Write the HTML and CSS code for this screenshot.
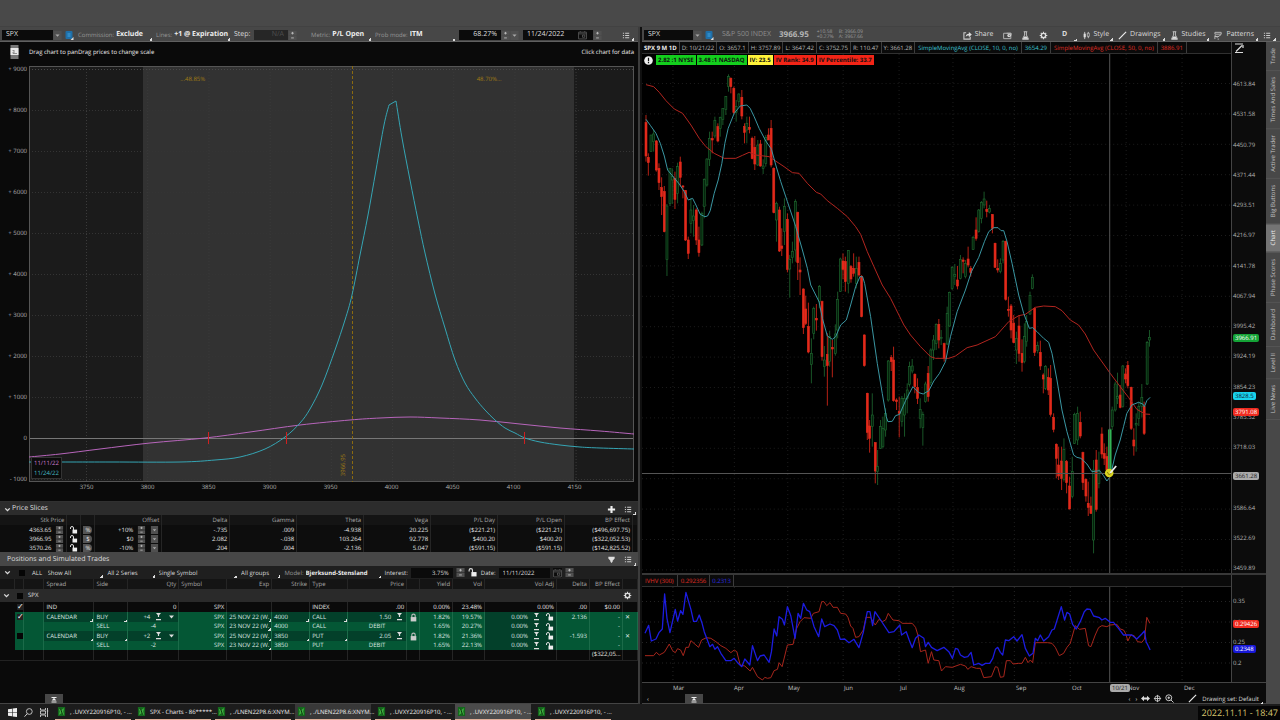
FILE: index.html
```html
<!DOCTYPE html>
<html lang="en">
<head>
<meta charset="utf-8">
<title>SPX - Charts</title>
<link rel="stylesheet" href="styles.css">
</head>
<body>
<svg class="defs" aria-hidden="true">
  <symbol id="i-link" viewBox="0 0 8 9"><rect width="7" height="8" rx="1" fill="#1f6fa8"/><path d="M2 2h3v4H2z" fill="#2f8ac6"/><path d="M8 9H5l3-3z" fill="#ddd"/></symbol>
  <symbol id="i-menu" viewBox="0 0 10 10"><path d="M1 2.500h1.300M3.500 2.500H8M1 5h1.300M3.500 5H8M1 7.500h1.300M3.500 7.500H8" stroke="#ccc" stroke-width="1.100"/></symbol>
  <symbol id="i-spin" viewBox="0 0 9 10"><path d="M0 0h9v4.600H0zM0 5.400h9V10H0z" fill="#505050"/><path d="M3 2.400h3M4.500 1v2.800M3 7.700h3" stroke="#bbb"/></symbol>
  <symbol id="i-step" viewBox="0 0 8 8"><path d="M1.500 0h5L4 3zM3.400 2h1.200v2H3.400zM1.500 6h5v1.300h-5z" fill="#ddd"/></symbol>
  <symbol id="i-down" viewBox="0 0 9 10"><path d="M0 0h9v10H0z" fill="#505050"/><path d="M2.200 4h4.600L4.500 6.500z" fill="#aaa"/></symbol>
  <symbol id="i-caret" viewBox="0 0 8 8"><path d="M1.500 2.500h5L4 5.500z" fill="#ddd"/></symbol>
  <symbol id="i-cal" viewBox="0 0 8 8"><path d="M.5 1.500h7v6h-7zM.5 3h7M2 .5v1M6 .5v1M4 4h2v2H4z" fill="none" stroke="#555" stroke-width=".8"/></symbol>
  <symbol id="i-chev" viewBox="0 0 8 8"><path d="M2 3l2 2 2-2" fill="none" stroke="#ddd" stroke-width="1.200"/></symbol>
  <symbol id="i-open" viewBox="0 0 8 8"><path d="M1 3V2a1.500 1.500 0 0 1 3 0v2" fill="none" stroke="#ddd"/><path d="M3 3.600h4.600V7.500H3z" fill="#eee"/></symbol>
  <symbol id="i-lock" viewBox="0 0 8 8"><path d="M2.500 4V2.500a1.500 1.500 0 0 1 3 0V4" fill="none" stroke="#bbb"/><path d="M1.500 3.600h5V7.500h-5z" fill="#ccc"/></symbol>
  <symbol id="i-gear" viewBox="0 0 10 10"><circle cx="5" cy="5" r="2.400" fill="none" stroke="#ddd" stroke-width="1.500"/><path d="M5 .8v1.500M5 7.700v1.500M.8 5h1.500M7.700 5h1.500M2 2l1.100 1.100M6.900 6.900L8 8M2 8l1.100-1.100M6.900 3.100L8 2" stroke="#ddd" stroke-width="1.300"/></symbol>
  <symbol id="i-flask" viewBox="0 0 10 10"><path d="M3 .8h4M4 1v3.500L1.800 8.500h6.400L6 4.500V1M1.500 9.300h7" fill="none" stroke="#ccc"/><path d="M3.500 6h3l1.200 2.500H2.300z" fill="#ddd"/></symbol>
  <symbol id="i-share" viewBox="0 0 10 10"><path d="M3.500 2H1v7h7V6.500" fill="none" stroke="#ccc" stroke-width="1.200"/><path d="M3 6.500C3.200 4 4.500 3 6.500 3V1L9.800 4 6.500 7V5C5 5 4 5.300 3 6.500z" fill="#ddd"/></symbol>
  <symbol id="i-folder" viewBox="0 0 10 10"><path d="M.7 2.500h8v6h-8zM4 2.500h5v2.500" fill="none" stroke="#bbb"/><circle cx="6.800" cy="5" r="2" fill="#ddd"/><path d="M6.800 4v1.200h1" stroke="#444" stroke-width=".7" fill="none"/></symbol>
  <symbol id="i-style" viewBox="0 0 10 10"><path d="M3 1v8M7 1v7" stroke="#ccc"/><path d="M1.800 3h2.400v4H1.800z" fill="#ddd"/><path d="M5.900 2.500h2.200v3.500H5.900z" fill="#4a4a4a" stroke="#ccc" stroke-width=".8"/></symbol>
  <symbol id="i-line" viewBox="0 0 10 10"><path d="M1 9l8-8" stroke="#eee" stroke-width="1.300"/></symbol>
  <symbol id="i-pattern" viewBox="0 0 10 10"><path d="M1 1.500h7v2H1zM1 9V5l2.500 2L8 4M4 9h1.500M1 6h4" fill="none" stroke="#ccc" stroke-width=".9"/></symbol>
  <symbol id="i-plus" viewBox="0 0 8 8"><path d="M4 .8v6.400M.8 4h6.400" stroke="#eee" stroke-width="1.900"/></symbol>
  <symbol id="i-filter" viewBox="0 0 8 8"><path d="M1.200 1.500h5.600v1.500L5 5v1L4 7 3 6V5L1.200 3z" fill="#ddd"/></symbol>
  <symbol id="i-doc" viewBox="0 0 9 14"><path d="M.5 0h8v14h-8z" fill="#777"/><path d="M.5 3h8v7h-8z" fill="#e8e8e8"/><path d="M2.500 5.500h2M5 7H3v1.500h4" stroke="#777" stroke-width=".8" fill="none"/></symbol>
  <symbol id="i-warn" viewBox="0 0 9 9"><circle cx="4.500" cy="4.500" r="4.300" fill="#eee"/><path d="M4.500 1.700v3.600M4.500 6v1.300" stroke="#111" stroke-width="1.200"/></symbol>
  <symbol id="i-up" viewBox="0 0 18 10"><path d="M0 0h18v10H0z" fill="#474747"/><path d="M6.500 3.500h5M6.500 8h5" stroke="#eee"/><path d="M9 3.700l2.300 2.800H6.700z" fill="#eee"/></symbol>
  <symbol id="i-axis" viewBox="0 0 10 12"><path d="M1 2h8M1 10.500h8M2 9.500l6-6M9 3v3" stroke="#ddd" stroke-width="1.200" fill="none"/></symbol>
  <symbol id="i-width" viewBox="0 0 10 10"><path d="M0 5l3.300-3v2h3.400V2L10 5 6.700 8V6H3.300v2z" fill="#ddd"/></symbol>
  <symbol id="i-cross" viewBox="0 0 10 10"><circle cx="5" cy="5" r="3" fill="none" stroke="#ccc"/><path d="M5 1v8M1 5h8" stroke="#ccc"/></symbol>
  <symbol id="i-zoom" viewBox="0 0 10 10"><circle cx="4.200" cy="4.200" r="3.300" fill="none" stroke="#ddd"/><path d="M6.700 6.700L9.500 9.500M2.700 4.200h3M4.200 2.700v3" stroke="#ddd"/></symbol>
  <symbol id="i-win" viewBox="0 0 9 9"><path d="M0 1.300L4 .7v3.600H0zM4.600.6L9 0v4.300H4.600zM0 4.800h4v3.500L0 7.800zM4.600 4.800H9V9l-4.400-.6z" fill="#eee"/></symbol>
  <symbol id="i-find" viewBox="0 0 9 9"><circle cx="5.300" cy="3.500" r="2.900" fill="none" stroke="#ccc" stroke-width=".9"/><path d="M3.200 5.700L.5 8.700" stroke="#ccc"/></symbol>
  <symbol id="i-task" viewBox="0 0 9 9"><path d="M.5 0v2h5V0M.5 9V7h5v2M.5 3h5v3h-5zM7.500 0v9M6.800 3h1.500" fill="none" stroke="#ccc" stroke-width=".9"/></symbol>
  <symbol id="i-app" viewBox="0 0 8 10"><path d="M0 0h8v10H0z" fill="#14671c"/><path d="M1 2l3 1 3-2-1 4 1 4-3-2-3 2 1-4z" fill="#3fae3f"/><path d="M3 2l2 6" stroke="#0a2b0c"/></symbol>
</svg>

<header class="titlebar"></header>
<main class="workspace">
  <section class="risk">
    <form class="toolbar risk-bar">
      <div class="sym"><input class="box" aria-label="Symbol" value="SPX"><button type="button" aria-label="Symbols"><svg class="ic"><use href="#i-down"/></svg></button><svg class="ic link"><use href="#i-link"/></svg></div>
      <label class="tri"><span>Commission:</span><select><option>Exclude</option></select></label>
      <label class="tri"><span>Lines:</span><select><option>+1 @ Expiration</option></select></label>
      <label class="step">Step:<input class="box dim" value="N/A" disabled><svg class="ic"><use href="#i-spin"/></svg></label>
      <label class="tri"><span>Metric:</span><select><option>P/L Open</option></select></label>
      <label class="tri"><span>Prob mode:</span><select><option>ITM</option></select></label>
      <div class="group"><input class="box right" aria-label="Probability" value="68.27%"><svg class="ic"><use href="#i-spin"/></svg><svg class="ic"><use href="#i-down"/></svg></div>
      <div class="group"><input class="box" aria-label="Expiration date" value="11/24/2022"><svg class="ic cal"><use href="#i-cal"/></svg><span class="gapbox"></span><svg class="ic"><use href="#i-spin"/></svg></div>
      <button type="button" class="tri end" aria-label="Menu"><svg class="ic"><use href="#i-menu"/></svg></button>
    </form>
    <div class="hint"><svg class="doc"><use href="#i-doc"/></svg><span>Drag chart to panDrag prices to change scale</span><span class="push">Click chart for data</span></div>
    <div class="risk-chart">
      <div class="risk-y"><span>+ 9000</span><span>+ 8000</span><span>+ 7000</span><span>+ 6000</span><span>+ 5000</span><span>+ 4000</span><span>+ 3000</span><span>+ 2000</span><span>+ 1000</span><span>0</span><span>- 1000</span></div>
      <div class="plot"><svg id="risk" viewBox="0 0 605 416" preserveAspectRatio="none"></svg>
        <span class="prob p1">...48.85%</span><span class="prob p2">48.70%...</span><span class="strike">3966.95</span>
        <div class="dates"><span>11/11/22</span><span>11/24/22</span></div>
      </div>
      <div class="risk-x"><span>3750</span><span>3800</span><span>3850</span><span>3900</span><span>3950</span><span>4000</span><span>4050</span><span>4100</span><span>4150</span></div>
    </div>
    <div class="bar dark"><svg class="ic"><use href="#i-chev"/></svg><h2>Price Slices</h2><button class="push" aria-label="Add slice"><svg class="ic"><use href="#i-plus"/></svg></button><button class="tri end" aria-label="Menu"><svg class="ic"><use href="#i-menu"/></svg></button></div>
    <table class="slices" id="slices"></table>
    <div class="bar"><h2>Positions and Simulated Trades</h2><button class="push" aria-label="Filter"><svg class="ic"><use href="#i-filter"/></svg></button><button class="tri end" aria-label="Menu"><svg class="ic"><use href="#i-menu"/></svg></button></div>
    <form class="filters">
      <svg class="ic"><use href="#i-chev"/></svg>
      <label class="all"><input type="checkbox">ALL</label>
      <select class="tri" aria-label="Show"><option>Show All</option></select>
      <select class="tri" aria-label="Series"><option>All 2 Series</option></select>
      <select class="tri" aria-label="Symbol filter"><option>Single Symbol</option></select>
      <select class="tri" aria-label="Groups"><option>All groups</option></select>
      <label class="tri"><span>Model:</span><select class="strong"><option>Bjerksund-Stensland</option></select></label>
      <label class="rate">Interest:<input class="box right" value="3.75%"><svg class="ic"><use href="#i-spin"/></svg><svg class="ic"><use href="#i-open"/></svg></label>
      <label class="rate">Date:<input class="box" value="11/11/2022"><svg class="ic cal"><use href="#i-cal"/></svg><svg class="ic"><use href="#i-spin"/></svg></label>
    </form>
    <table class="positions" id="positions"></table>
    <footer class="pane-foot"><button aria-label="Expand"><svg class="up"><use href="#i-up"/></svg></button></footer>
  </section>

  <section class="charts">
    <form class="toolbar chart-bar">
      <div class="sym"><input class="box" aria-label="Chart symbol" value="SPX"><button type="button" aria-label="Symbols"><svg class="ic"><use href="#i-down"/></svg></button><svg class="ic link"><use href="#i-link"/></svg></div>
      <span class="name">S&amp;P 500 INDEX</span><strong class="last">3966.95</strong>
      <div class="two"><span>+10.58</span><span>+0.27%</span></div><div class="two"><span>B: 3966.09</span><span>A: 3967.66</span></div>
      <button type="button" class="push"><svg class="ic"><use href="#i-share"/></svg>Share</button>
      <button type="button" aria-label="Workspaces"><svg class="ic"><use href="#i-folder"/></svg></button>
      <button type="button" aria-label="Studies"><svg class="ic"><use href="#i-flask"/></svg></button>
      <button type="button" aria-label="Settings"><svg class="ic"><use href="#i-gear"/></svg></button>
      <button type="button" class="tri day">D</button>
      <button type="button" class="tri"><svg class="ic"><use href="#i-style"/></svg>Style</button>
      <button type="button" class="tri"><svg class="ic"><use href="#i-line"/></svg>Drawings</button>
      <button type="button" class="tri"><svg class="ic"><use href="#i-flask"/></svg>Studies</button>
      <button type="button" class="tri"><svg class="ic"><use href="#i-pattern"/></svg>Patterns</button>
      <button type="button" class="tri" aria-label="Menu"><svg class="ic"><use href="#i-menu"/></svg></button>
    </form>
    <div class="body">
      <div class="stack">
        <div class="pair price">
          <div class="pane">
            <svg id="price" viewBox="0 0 590 531" preserveAspectRatio="none"></svg>
            <div class="ohlc"><b>SPX 9 M 1D</b><span>D: 10/21/22</span><span>O: 3657.1</span><span>H: 3757.89</span><span>L: 3647.42</span><span>C: 3752.75</span><span>R: 110.47</span><span>Y: 3661.28</span><span class="cy">SimpleMovingAvg (CLOSE, 10, 0, no)</span><span class="cy">3654.29</span><span class="rd">SimpleMovingAvg (CLOSE, 50, 0, no)</span><span class="rd">3886.91</span></div>
            <div class="badges"><svg class="ic"><use href="#i-warn"/></svg><span class="g">2.82 :1 NYSE</span><span class="g">3.48 :1 NASDAQ</span><span class="y">IV: 23.5</span><span class="r">IV Rank: 34.9</span><span class="r">IV Percentile: 33.7</span></div>
          </div>
          <div class="axis">
            <svg class="axis-ic"><use href="#i-axis"/></svg>
            <span>4613.84</span><span>4531.58</span><span>4450.79</span><span>4371.44</span><span>4293.51</span><span>4216.97</span><span>4141.78</span><span>4067.94</span><span>3995.42</span><span>3924.19</span><span>3854.23</span><span>3785.52</span><span>3718.03</span><span>3651.74</span><span>3586.64</span><span>3522.69</span><span>3459.89</span>
            <mark class="t-green">3966.91</mark><mark class="t-cyan">3828.5</mark><mark class="t-red">3791.08</mark><mark class="t-grey">3661.28</mark>
          </div>
        </div>
        <div class="pair vol">
          <div class="pane">
            <svg id="vol" viewBox="0 0 590 107" preserveAspectRatio="none"></svg>
            <div class="ohlc"><span class="rd">IVHV (300)</span><span class="rd">0.292356</span><span class="bl">0.2313</span></div>
          </div>
          <div class="axis"><span>0.35</span><span>0.3</span><span>0.25</span><span>0.2</span><mark class="v-red">0.29426</mark><mark class="v-blue">0.2348</mark></div>
        </div>
        <div class="months"><span></span><span>Mar</span><span>Apr</span><span>May</span><span>Jun</span><span>Jul</span><span>Aug</span><span>Sep</span><span>Oct</span><span>Nov</span><span>Dec</span><mark>10/21</mark></div>
        <footer class="pane-foot chart-foot"><button aria-label="Scroll left" class="small">‹</button><button aria-label="Expand"><svg class="up"><use href="#i-up"/></svg></button>
          <button class="push small" aria-label="Back">‹</button><button class="small" aria-label="Forward">›</button><button aria-label="Fit width"><svg class="ic"><use href="#i-width"/></svg></button><button aria-label="Crosshair"><svg class="ic"><use href="#i-cross"/></svg></button><button aria-label="Zoom"><svg class="ic"><use href="#i-zoom"/></svg></button><button class="draw" aria-label="Line"><svg class="ic"><use href="#i-line"/></svg></button><button class="tri set">Drawing set: Default</button></footer>
      </div>
      <nav class="tabs"><button>Trade</button><button>Times And Sales</button><button>Active Trader</button><button>Big Buttons</button><button class="on">Chart</button><button>Phase Scores</button><button>Dashboard</button><button>Level II</button><button>Live News</button></nav>
    </div>
  </section>
</main>
<footer class="taskbar">
  <button class="sys" aria-label="Start"><svg class="ic"><use href="#i-win"/></svg></button><button class="sys" aria-label="Search"><svg class="ic"><use href="#i-find"/></svg></button><button class="sys" aria-label="Task view"><svg class="ic"><use href="#i-task"/></svg></button>
  <button class="app"><svg class="ic"><use href="#i-app"/></svg>, .UVXY220916P10, - ...</button>
  <button class="app"><svg class="ic"><use href="#i-app"/></svg>SPX - Charts - 86*****...</button>
  <button class="app"><svg class="ic"><use href="#i-app"/></svg>, ./LNEN22P8.6:XNYM...</button>
  <button class="app lit"><svg class="ic"><use href="#i-app"/></svg>, ./LNEN22P8.6:XNYM...</button>
  <button class="app"><svg class="ic"><use href="#i-app"/></svg>, .UVXY220916P10, - ...</button>
  <button class="app active"><svg class="ic"><use href="#i-app"/></svg>, .UVXY220916P10, - ...</button>
  <button class="app"><svg class="ic"><use href="#i-app"/></svg>, .UVXY220916P10, - ...</button>
  <time>2022.11.11 - 18:47</time>
</footer>
<script src="app.js"></script>
</body>
</html>
```

FILE: styles.css
```css
* { box-sizing: border-box; }
body { margin: 0; min-height: 100vh; display: flex; flex-direction: column; background: #0a0a0a; color: #dcdcdc; font: 6px/10px "Open Sans", "Noto Sans", sans-serif; text-rendering: geometricPrecision; overflow-x: hidden; }
.defs { position: absolute; width: 0; height: 0; }
button, input, select { font: inherit; color: inherit; background: none; border: 0; padding: 0; margin: 0; appearance: none; border-radius: 0; min-width: 0; text-rendering: inherit; }
select { flex: 1; }
svg { display: block; }
.ic { width: 9px; height: 9px; flex: none; }
.push { margin-left: auto; }
.tri { background-image: linear-gradient(135deg, transparent 50%, #ddd 50%); background-size: 3px 3px; background-repeat: no-repeat; background-position: right bottom; }
h2 { margin: 0; font-size: 7px; font-weight: 400; }

.titlebar { height: 27px; background: #494949; border-bottom: 1px solid #424242; }
.workspace { flex: 1; display: grid; grid-template-columns: minmax(0, 1fr) minmax(0, 1fr); }
.risk { display: flex; flex-direction: column; border-right: 2px solid #3c3c3c; min-width: 0; }
.charts { display: flex; flex-direction: column; padding-left: 2px; min-width: 0; background: #101010; }

.toolbar { height: 15px; padding: 2px 4px 0 2px; background: #474747; border-bottom: 1px solid #606060; align-items: center; font-size: 7px; }
.risk-bar { display: grid; grid-template-columns: 72fr 74fr 74fr 73fr 60fr 80fr 60fr 79fr 28fr; gap: 4px; }
.risk-bar > *, .sym, .group, .step { display: flex; align-items: center; height: 12px; min-width: 0; }
.toolbar label > span, .filters label > span { color: #969696; margin-right: 2px; font-size: 6px; }
.toolbar label select, .strong { font-weight: 700; color: #eee; }
.box { background: #0b0b0b; color: #ddd; height: 10px; padding: 0 4px; flex: 1; width: 10px; }
.right { text-align: right; }
.dim { background: #262626; color: #505050; text-align: right; margin-left: 4px; }
.step { padding-right: 10px; }
.sym .link { margin-left: 3px; }
.cal, .gapbox { background: #0b0b0b; height: 10px; }
.gapbox { width: 6px; }
.end { width: 12px; height: 12px; }
.risk-bar .end { justify-self: end; }

.hint { height: 24px; display: flex; align-items: center; gap: 10px; padding: 0 4px 4px 10px; color: #eee; }
.hint .doc { width: 9px; height: 14px; }
.risk-chart { display: grid; grid-template-columns: 29px 1fr; grid-template-rows: 1fr 19px; padding-right: 4px; height: 435px; border-bottom: 1px solid #303030; box-sizing: content-box; }
.risk-y { display: flex; flex-direction: column; justify-content: space-between; text-align: right; padding: 0 2px 0 0; margin: -2px 0; color: #b4b4b4; }
.plot { position: relative; min-height: 0; }
.plot svg { width: 100%; height: 100%; }
.prob, .strike { position: absolute; color: #a07c14; }
.p1 { left: 25%; top: 2%; }
.p2 { left: 74%; top: 2%; }
.strike { left: 51%; bottom: 6px; writing-mode: vertical-rl; transform: rotate(180deg); }
.dates { position: absolute; left: 2px; bottom: 3px; background: #0b0b0b; border: 1px solid #333; padding: 0 2px; display: flex; flex-direction: column; color: #cb7bd0; }
.dates span + span { color: #45b7c4; }
.risk-x { grid-column: 2; display: grid; grid-template-columns: repeat(9, 61fr) 29fr; margin-left: 27px; color: #b4b4b4; text-align: center; }

.bar { height: 14px; flex: none; display: flex; align-items: center; background: #474747; padding: 1px 2px 0 7px; gap: 8px; color: #ddd; }
.bar.dark { height: 13px; background: #2c2c2c; padding-left: 3px; gap: 0; }
.bar.dark .end { margin-left: 8px; }
table { border-collapse: collapse; table-layout: fixed; width: 100%; color: #e4e4e4; }
td, th { padding: 0 2px; font-weight: 400; white-space: nowrap; overflow: hidden; line-height: 9px; border-right: 1px solid #252525; text-align: right; }
th { color: #a8a8a8; background: #141414; height: 10px; }
.slices td { line-height: 8px; height: 9px; background: #0d0d0d; }
.cell { display: flex; justify-content: flex-end; align-items: center; gap: 4px; height: 8px; }
.cell .ic { height: 8px; }
.chip { display: block; background: #555; border-radius: 0 4px 4px 0; text-align: center; height: 8px; }
.filters { height: 13px; background: #1f1f1f; display: grid; grid-template-columns: 12px 25fr 57fr 48fr 80fr 40fr 98fr 94fr 95fr 58fr; gap: 4px; align-items: center; padding: 1px 3px; color: #ddd; }
.filters > label { display: flex; align-items: center; height: 11px; min-width: 0; }
.filters > select { height: 11px; }
.all { gap: 7px; }
input[type=checkbox] { width: 6px; height: 6px; background: #050505; display: block; flex: none; }
input[type=checkbox]:checked { background: #222; }
input[type=checkbox]:checked::after { content: "✓"; color: #fff; font: 8px/6px "DejaVu Sans", sans-serif; display: block; }
.rate { gap: 3px; }
.l { text-align: left; }
.c { text-align: center; }
.positions td { height: 10px; }
.positions .sell td { height: 9px; }
.positions .head td { background: #2a2a2a; height: 13px; border-color: #2a2a2a; text-align: left; }
.positions .head td:last-child { padding: 0; }
.green td { background-color: #045735; border-right-color: #1b6b49; color: #dfe8e3; }
.green td.in { background-color: #03402a; }
.positions .green td:first-child { background: #0a0a0a; }
.positions td:first-child { border-right: 0; }
.total td { border-bottom: 1px solid #222; }
.pane-foot { margin-top: auto; height: 10px; display: flex; padding-left: 45px; border-bottom: 1px solid #444; }
.up { width: 18px; height: 10px; }

.chart-bar { display: flex; gap: 5px; }
.chart-bar .sym { width: 70px; margin-right: 3px; flex: none; }
.chart-bar button { display: flex; align-items: center; gap: 3px; height: 12px; padding-right: 4px; flex: none; }
.chart-bar .sym button { padding: 0; }
.name { color: #8c8c8c; }
.last { font-size: 8px; color: #b4b4b4; margin: 0 3px; }
.two { display: flex; flex-direction: column; font-size: 5px; line-height: 5px; color: #9c9c9c; }
.day { width: 20px; font-weight: 700; justify-content: center; }
.body { flex: 1; display: flex; min-height: 0; }
.stack { flex: 1; min-width: 0; display: flex; flex-direction: column; background: #0a0a0a; }
.pair { display: grid; grid-template-columns: 1fr 34px; }
.price { flex: 531 1 531px; }
.vol { flex: 109 1 109px; border-top: 2px solid #383838; }
.pane { position: relative; background: #000; border-right: 1px solid #444; min-width: 0; }
.pane > svg { position: absolute; width: 100%; height: 100%; }
.ohlc { position: relative; display: flex; height: 12px; line-height: 12px; background: #0a0a0a; border-bottom: 1px solid #303030; white-space: nowrap; color: #bcbcbc; }
.ohlc > * { border-right: 1px solid #3c3c3c; padding: 0 2px; }
.ohlc > .cy, .ohlc > .rd { padding: 0 3px; }
.ohlc b { color: #eee; }
.ohlc .cy { color: #3ec4d2; }
.ohlc .rd { color: #e02e24; }
.ohlc .bl { color: #2f2fe0; }
.badges { position: relative; display: flex; gap: 1px; margin-top: 1px; padding-left: 2px; align-items: center; font-weight: 700; color: #111; }
.badges .ic { margin-right: 2px; }
.badges span { padding: 0 2px; }
.g { background: #13cf1d; }
.y { background: #fff23a; }
.r { background: #f32416; }
.axis { position: relative; display: flex; flex-direction: column; justify-content: space-between; color: #b4b4b4; background: #0c0c0c; }
.axis > span { padding-left: 1px; }
.price .axis { padding-top: 37px; }
.axis-ic { position: absolute; left: 2px; top: 0; width: 10px; height: 12px; }
.vol .axis { padding: 21px 0 14px; }
mark { position: absolute; left: 1px; color: #fff; border-radius: 2px; padding: 0 2px; line-height: 8px; }
.t-green { top: 55%; background: #14a336; }
.t-cyan { top: 66%; background: #18d4ee; color: #123; }
.t-red { top: 69%; background: #ef2b20; }
.t-grey { top: 81%; background: #aaa; color: #222; }
.v-red { top: 42%; background: #ef2b20; }
.v-blue { top: 65%; background: #1718d8; }
.months { position: relative; display: grid; grid-template-columns: 31fr 61fr 54fr 56fr 56fr 54fr 62fr 56fr 56fr 56fr 82fr; height: 12px; color: #c4c4c4; border-top: 1px solid #444; }
.months mark { left: 75%; top: 1px; background: #aaa; color: #222; }
.chart-foot { padding: 0 3px 0 4px; align-items: center; color: #ddd; gap: 3px; margin-top: 0; }
.chart-foot .small { width: 4px; }
.chart-foot .small:first-child { margin-right: 32px; }
.draw { margin: 0 2px 0 11px; }
.set { padding-right: 4px; }
.tabs { width: 14px; background: #484848; display: flex; flex-direction: column; }
.tabs button { writing-mode: vertical-rl; transform: rotate(180deg); padding: 6px 0; width: 14px; line-height: 12px; border-top: 1px solid #555; color: #c4c4c4; }
.tabs .on { background: #747474; color: #eee; }

.taskbar { height: 16px; background: #1c1c1c; display: flex; gap: 4px; color: #eee; }
.sys { width: 11px; display: flex; align-items: center; }
.sys:first-child { margin-left: 8px; }
.sys + .sys { margin-left: 1px; }
.app { flex: 0 1 76px; white-space: nowrap; display: flex; align-items: center; gap: 4px; padding-left: 2px; border-bottom: 1px solid #e0b09a; }
.lit { background: #383838; }
.active { background: #4b4b4b; }
.taskbar time { margin-left: auto; background: #050505; color: #d6c46e; font-size: 9px; line-height: 14px; margin-top: 2px; padding: 0 2px 0 4px; }
```

FILE: app.js
```javascript
const line = (pts, color, w = 1, extra = "") =>
  `<polyline points="${pts}" fill="none" stroke="${color}" stroke-width="${w}" stroke-linejoin="round" ${extra}/>`;
const rule = (x1, y1, x2, y2, color, dash = "") =>
  `<path d="M${x1} ${y1}L${x2} ${y2}" stroke="${color}" stroke-dasharray="${dash}" fill="none"/>`;

// Risk profile
let s = `<rect width="605" height="416" fill="#1b1b1b"/><rect x="114" width="431" height="416" fill="#323232"/>`;
for (let i = 0; i < 9; i++) s += rule(57.5 + i * 61.2, 0, 57.5 + i * 61.2, 416, "#3b3b3b", "1 2");
for (let i = 0; i < 11; i++) s += rule(0, 3.5 + i * 41, 605, 3.5 + i * 41, i > 0 ? "#343434" : "#484848", "1 2");
s += rule(0, 372.5, 605, 372.5, "#777");
s += `<rect x=".5" y=".5" width="604" height="415" fill="none" stroke="#555"/>`;
s += rule(323.5, 0, 323.5, 416, "#8a6a10", "3 2");
const smooth = (p) => {
  let d = `M${p[0]} `;
  for (let i = 0; i < p.length - 1; i++) {
    const a = p[i - 1] || p[i], b = p[i], c = p[i + 1], e = p[i + 2] || c;
    d += `C${b[0] + (c[0] - a[0]) / 6} ${b[1] + (c[1] - a[1]) / 6} ${c[0] - (e[0] - b[0]) / 6} ${c[1] - (e[1] - b[1]) / 6} ${c[0]} ${c[1]}`;
  }
  return d;
};
const pairs = (t, dx, dy) => t.split(" ").map((v) => v.split(",").map(Number)).map(([x, y]) => [x - dx, y - dy]);
const violet = pairs("29,457 60,454 100,449 150,443 205,438 250,432 300,425 350,420 380,418 410,417 440,418 480,420 520,424 560,428 600,431 634,434", 29, 66);
const rise = pairs("29,462 110,462 180,462 215,460 240,457 265,449 285,437 300,423 310,409 322,385 335,350 345,320 352,295 360,255 368,215 376,170 384,125 389,105", 29, 66);
const fall = pairs("396,101 402,138 410,180 418,220 425,253 435,294 445,328 455,360 465,383 475,398 485,410 495,420 505,428 515,433 525,438 540,442 560,445 580,447 600,448 634,449", 29, 66);
s += `<path d="${smooth(violet)}" fill="none" stroke="#b765bb"/><path d="${smooth(rise)}L367 35${smooth(fall)}" fill="none" stroke="#35a5b4"/>`;
for (const x of [179.5, 257.5, 495.5]) s += rule(x, 366, x, 378, "#d02020");
document.getElementById("risk").innerHTML = s;

// Candles: x, high, body top, body bottom, low (thirds of a pixel), r = down, g = up
const early = `15,165,188,288,305,r 22,280,292,308,347,r 30,225,225,275,275,g 38,210,222,245,275,g 46,240,243,330,335,r 54,310,325,368,390,r 62,352,383,410,465,r 70,378,395,515,517,r 78,432,438,598,648,g 87,325,325,430,438,g 94,325,350,360,432,g 102,335,355,418,447,r 110,308,320,400,430,g 118,290,306,352,380,r 126,375,378,380,415,r 134,390,392,540,543,r 142,530,540,580,597,r 150,415,450,490,520,g 158,435,468,482,530,g 166,445,450,540,555,r 174,500,540,578,590,r 183,455,460,555,558,g 190,355,358,440,475,g 198,295,297,375,380,g 206,215,235,298,318,g 214,215,236,240,280,r 222,170,182,228,235,g 231,190,200,243,247,r 238,170,172,205,230,g 246,145,145,178,195,g 255,108,110,148,165,g 263,43,50,80,95,g 270,52,55,80,100,r 279,80,85,158,162,r 286,120,140,158,185,g 294,100,102,125,140,g 303,90,112,168,178,r 311,190,200,217,250,r 318,170,190,210,250,g 326,170,202,208,220,r 334,230,235,296,298,r 342,228,262,312,330,r 351,240,255,315,318,g 359,240,252,318,320,r 367,298,318,325,342,g 375,225,232,310,320,g 383,205,225,240,240,r 391,180,205,315,322,r 399,322,325,458,460,r 407,425,430,480,545,g 416,440,450,573,576,r 423,505,558,565,588,r 431,415,440,515,555,g 440,460,478,628,637,r 447,585,598,627,713,g 455,545,575,593,610,g 464,418,425,570,605,g 471,455,458,608,660,r 478,592,630,636,705,r 488,685,687,803,822,r 495,707,747,790,795,r 503,728,800,876,880,r 512,835,880,913,970,g 519,740,745,820,838,g 527,732,775,780,812,r 536,675,680,725,745,g 544,722,725,890,902,r 551,858,900,920,950,g 560,820,883,917,1037,r 567,812,830,905,920,g 575,840,862,867,952,r 584,793,822,880,887,g 591,695,718,810,835,g 599,593,597,694,696,g 607,580,603,628,658,r 614,590,605,665,695,r 623,570,572,670,700,g 631,615,620,657,668,r 639,580,625,640,650,r 647,590,625,670,685,g 655,590,607,645,650,r 663,645,650,770,772,r 671,823,825,917,920,r 680,998,1000,1117,1140,r 687,1080,1098,1135,1178,r 695,1000,1065,1100,1160,g 704,1147,1148,1233,1270,r 711,1170,1220,1235,1275,g 720,1080,1100,1165,1167,g 727,1070,1105,1160,1165,g 735,1045,1060,1110,1130,g 743,900,903,1020,1025,g`;
const late = `92,525,533,545,573,r 99,500,540,662,665,r 108,655,660,665,690,r 116,650,695,700,772,r 124,648,655,725,740,g 132,640,655,705,770,g 140,610,630,655,700,g 147,545,560,613,620,g 155,537,558,573,580,g 163,580,583,620,640,r 171,595,622,655,672,r 179,655,688,715,745,g 187,695,703,742,797,g 195,605,612,665,668,g 203,558,580,650,665,r 211,505,510,608,615,g 219,465,480,510,540,g 227,430,433,490,510,g 235,417,433,480,505,r 242,450,472,476,495,g 251,488,491,535,545,r 260,380,400,492,495,g 267,335,337,438,440,g 275,258,262,325,330,g 283,252,283,290,315,g 291,258,300,318,328,r 300,225,238,295,298,g 308,232,240,244,280,r 315,240,250,290,295,g 323,200,237,255,262,r 331,258,265,278,290,r 338,168,172,208,210,g 347,112,150,175,182,r 355,87,90,155,158,g 363,63,68,115,130,g 371,35,57,75,85,g 379,62,88,95,112,r 387,75,86,96,100,g 396,102,104,145,160,r 404,188,190,262,263,r 412,238,265,270,278,r 420,235,250,275,280,g 428,180,185,240,250,g 436,182,184,358,362,r 444,350,388,391,410,r 452,372,378,450,475,r 460,405,430,488,490,r 468,455,475,510,552,g 476,405,438,520,545,r 485,478,520,548,575,r 492,430,470,545,550,g 499,405,425,485,500,g 509,335,347,402,405,g 516,283,292,325,328,g 523,382,385,517,528,r 532,485,497,512,520,g 540,482,517,558,570,r 549,580,585,597,640,r 556,555,560,625,630,g 564,565,592,630,645,r 571,555,595,703,710,r 580,700,712,748,757,r 588,790,793,835,895,r 595,800,855,888,900,r 604,800,843,895,930,r 611,775,808,898,905,g 619,840,845,908,940,r 628,890,918,987,988,r 636,830,875,950,955,g 643,698,703,790,792,g 652,680,700,780,795,g 660,695,727,768,775,r 668,815,818,908,930,r 677,895,898,948,965,r 684,905,970,982,1008,r 692,950,978,1000,1002,r 700,840,870,1080,1120,g 708,810,840,988,995,r 716,815,870,910,925,g 725,742,762,822,835,r 732,790,820,835,855,r 740,800,830,870,880,r 749,745,750,865,870,h 756,680,690,740,750,g 765,605,612,690,695,g 772,578,650,655,672,g 780,615,645,682,685,r 788,555,558,680,683,g 796,565,582,597,610,r 803,543,556,617,625,r 813,620,622,745,750,r 821,745,780,798,827,r 828,700,730,735,815,g 836,665,680,715,738,g 845,612,652,680,712,g 852,665,680,760,765,r 861,483,487,612,615,g 868,450,472,480,500,g`;
const candles = (t, ox, oy) => t.split(" ").map((row) => {
  const v = row.split(","), x = v[0] / 3 + ox, y = v.slice(1, 5).map((n) => n / 3 + oy);
  const color = { r: "#e32a1b", g: "#1f6b31", h: "#2fd05a" }[v[5]];
  const fill = v[5] === "g" ? "#04200b" : color;
  return `<path d="M${x} ${y[0]}V${y[3]}" stroke="${color}" stroke-width=".8"/><rect x="${x - 1}" y="${y[1]}" width="2" height="${Math.max(y[2] - y[1], 1)}" fill="${fill}" stroke="${color}" stroke-width="${v[5] === "h" ? 1.2 : .6}"/>`;
}).join("");
const third = (t, ox, oy) => t.split(" ").map((p) => { const [x, y] = p.split(","); return `${x / 3 + ox},${y / 3 + oy}`; }).join(" ");

const months = [31, 92.5, 146, 201.5, 257.5, 311.5, 373, 429, 485, 541];
let p = "";
for (const x of months) p += rule(x, 12, x, 531, "#1d1d1d", "1 3");
for (let i = 0; i < 17; i++) p += rule(0, 41.5 + i * 30.4, 590, 41.5 + i * 30.4, "#1d1d1d", "1 3");
const ax = -1, ay = 18, bx = 219, by = 138;
p += candles(early, ax, ay) + candles(late, bx, by);
p += line(third("15,74 38,80 55,97 75,122 100,147 125,160 150,195 175,235 195,260 220,280 250,295 285,295 305,286 325,277 345,285 385,290 400,300 430,320 455,338 475,340 500,370 527,397 540,402 560,422 590,445 620,470 645,500 660,523 680,575 700,620 725,675 750,715", ax, ay) + " " + third("105,385 130,435 150,465 180,500 210,530 225,535 265,535 285,528 320,503 350,495 405,470 445,425 475,407 495,403 525,382 550,378 585,380 605,392 630,420 655,435 675,462 700,510 750,580 780,620 805,652 830,688 855,702 870,703", bx, by), "#b3251f");
p += line(third("15,178 28,196 45,220 58,250 70,288 80,330 95,348 115,372 130,395 142,420 155,415 165,435 178,463 192,470 200,468 208,452 220,400 232,360 243,310 252,250 262,205 280,160 298,138 318,135 328,145 340,170 355,205 375,243 392,268 405,315 420,365 440,425 465,500 485,570 500,625 510,675 535,725 545,775 560,828 575,838 585,830 600,795 617,780 630,735 645,680 658,650 666,650 672,670 690,770 710,910 725,1000 737,1070 742,1085", ax, ay) + " " + third("95,724 105,707 117,703 135,662 157,620 175,638 188,642 205,632 220,603 237,580 255,545 270,470 290,395 315,330 333,275 355,232 372,185 385,155 400,143 413,143 422,152 430,152 440,185 455,250 475,345 490,400 507,445 517,443 530,455 550,475 565,487 575,520 590,600 605,690 620,755 640,825 650,832 662,835 680,852 695,875 718,872 730,887 740,903 750,890 765,825 780,780 790,740 800,700 815,675 835,667 848,672 853,680 860,662 870,652", bx, by), "#3a97a3");
p += rule(468.5, 12, 468.5, 531, "#555") + rule(0, 431.5, 590, 431.5, "#555");
p += `<circle cx="468" cy="431" r="4.300" fill="#d7d21f"/><path d="M466 430l2 3 2-2" stroke="#8b8410" fill="none"/><path d="M469 431l6-7" stroke="#eee" stroke-width="1.800"/>`;
document.getElementById("price").innerHTML = p;

// Implied against historical volatility
let q = "";
for (const x of months) q += rule(x, 12, x, 107, "#242424", "1 3");
for (const y of [26.5, 47, 67.5, 88]) q += rule(0, y, 590, y, "#242424", "1 3");
q += rule(468.5, 0, 468.5, 107, "#555");
q += line(third("12,287 38,287 46,277 55,285 70,277 85,252 95,272 103,278 110,266 119,270 127,287 135,262 143,262 150,242 165,255 173,262 182,240 197,233 210,235 225,245 240,257 255,265 270,278 280,270 288,275 298,315 312,318 328,333 335,322 350,350 365,360 372,352 380,355 390,353 400,332 410,328 415,308 424,320 440,255 457,253 467,207 478,185 490,173 510,175 518,160 535,155 543,125 550,125 558,137 568,128 577,142 590,142 600,160 615,162 622,172 630,198 637,205 645,232 655,230 668,210 676,172 690,172 697,185 704,195 715,178 725,185 735,180 743,160 757,180 775,182 785,190 815,190 825,202 832,225 840,275 855,270 863,310 873,275 880,300 895,302 903,333 915,320 935,322", -1, -15) + " " + third("0,313 15,318 22,328 32,320 48,325 60,325 70,353 93,350 105,320 112,322 120,352 130,350 138,302 150,302 158,312 175,310 185,310 195,292 203,308 210,300 217,308 225,248 262,248 275,250 285,262 297,287 310,280 320,262 330,250 345,197 358,208 375,205 385,257 392,260 405,225 415,203 425,197 440,200 450,195 470,193 480,207 490,210 497,222 503,243 512,225 522,227 532,245 545,247 553,237 560,172 569,190", 319, -15), "#a8261c");
q += line(third("12,220 23,196 31,243 45,237 54,218 64,207 71,102 78,175 87,218 103,148 110,183 119,152 126,163 135,97 150,148 158,184 167,184 175,165 183,188 190,215 207,260 215,253 222,268 230,260 240,280 255,302 270,302 280,295 292,310 303,320 312,297 327,315 335,257 350,302 358,288 370,285 385,307 392,275 400,207 408,228 415,170 425,178 431,195 440,140 450,167 463,235 472,160 480,175 488,130 498,150 507,155 520,200 534,230 543,177 552,200 568,192 580,197 590,210 599,238 612,237 625,248 640,238 655,263 668,217 680,155 688,155 696,197 703,155 720,180 745,218 760,215 778,195 783,225 797,215 806,240 815,263 825,235 835,225 850,235 855,260 863,247 873,262 890,272 910,262 925,275 936,295 945,265 952,267", -1, -15) + " " + third("0,285 12,292 22,290 32,277 40,315 55,310 65,316 75,310 88,310 97,295 105,268 112,262 120,277 127,285 135,240 145,242 160,230 170,243 185,224 195,265 207,288 218,280 225,235 232,242 240,225 250,243 265,230 275,210 282,207 303,140 313,180 320,157 328,162 337,193 348,207 360,185 372,155 380,147 390,148 400,168 418,173 425,180 435,175 450,187 460,187 475,205 490,225 515,225 530,237 545,222 553,213 558,245 563,255 570,270", 319, -15), "#1c1ce0", 1.3);
document.getElementById("vol").innerHTML = q;

// Tables
const ic = (n) => `<svg class="ic"><use href="#i-${n}"/></svg>`;
const btn = (n, label) => `<button aria-label="${label}">${ic(n)}</button>`;
const cell = (...a) => `<div class="cell">${a.join("")}</div>`;
const cols = (w) => `<colgroup>${w.map((n) => `<col style="width:${n / 6.38}%">`).join("")}</colgroup>`;

const slices = [
  ["4363.65", "%", "+10%", "-.735", ".009", "-4.938", "20.225", "($221.21)", "($221.21)", "($496,697.75)"],
  ["3966.95", "$", "$0", "2.082", "-.038", "103.264", "92.778", "$400.20", "$400.20", "($322,052.53)"],
  ["3570.26", "%", "-10%", ".204", ".004", "-2.136", "5.047", "($591.15)", "($591.15)", "($142,825.52)"],
];
document.getElementById("slices").innerHTML = cols([67, 14, 14, 67, 68, 67, 67, 67, 67, 67, 68, 5]) +
  `<thead><tr>${["Stk Price", "", "", "Offset", "Delta", "Gamma", "Theta", "Vega", "P/L Day", "P/L Open", "BP Effect", ""].map((h) => `<th>${h}</th>`).join("")}</tr></thead><tbody>` +
  slices.map((r) => `<tr><td>${cell(r[0], btn("spin", "Price step"))}</td><td>${cell(btn("open", "Lock"))}</td><td><span class="chip">${r[1]}</span></td><td>${cell(r[2], btn("spin", "Offset step"), btn("down", "Offsets"))}</td>${r.slice(3).map((v) => `<td>${v}</td>`).join("")}<td></td></tr>`).join("") + "</tbody>";

const leg = (on, spread, qty, exp, strike, type, price, yld, vol, delta) => {
  const buy = spread !== "";
  const a = buy ? "l in tri" : "l";
  return `<tr class="green ${buy ? "" : "sell"}"><td></td><td>${buy ? `<input type="checkbox" aria-label="Include ${type}" ${on ? "checked" : ""}>` : ""}</td><td></td><td class="${a}">${spread}</td><td class="${a}">${buy ? "BUY" : "SELL"}</td>
  <td class="${buy ? "in" : "c"}">${buy ? cell(qty, btn("step", "Quantity step"), btn("caret", "Quantities")) : qty}</td><td>SPX</td><td class="l in tri">${exp}</td><td class="${a}">${strike}</td><td class="${a}">${type}</td>
  <td class="${buy ? "in" : "c"}">${buy ? cell(price, btn("step", "Price step")) : "DEBIT"}</td><td>${buy ? ic("lock") : ""}</td><td>${yld}</td><td>${vol}</td><td class="in">${cell("0.00%", btn("step", "Vol step"), btn("open", "Lock vol"))}</td><td>${delta}</td><td>-</td><td class="l">${buy ? "✕" : ""}</td></tr>`;
};
document.getElementById("positions").innerHTML = cols([15, 9, 20, 50, 34, 51, 48, 45, 38, 38, 59, 13, 33, 32, 72, 33, 33, 15]) +
  `<thead><tr><th></th><th></th><th></th><th class="l">Spread</th><th class="l">Side</th><th>Qty</th><th class="l">Symbol</th><th>Exp</th><th>Strike</th><th class="l">Type</th><th>Price</th><th></th><th>Yield</th><th>Vol</th><th>Vol Adj</th><th>Delta</th><th>BP Effect</th><th></th></tr></thead><tbody>
  <tr class="head"><td>${ic("chev")}</td><td><input type="checkbox" aria-label="SPX group"></td><td colspan="15">&nbsp;SPX</td><td>${ic("gear")}</td></tr>
  <tr><td></td><td><input type="checkbox" checked aria-label="Include index"></td><td></td><td class="l">IND</td><td></td><td>0</td><td>SPX</td><td></td><td></td><td class="l">INDEX</td><td>.00</td><td></td><td>0.00%</td><td>23.48%</td><td>0.00%</td><td>.00</td><td>$0.00</td><td></td></tr>` +
  leg(true, "CALENDAR", "+4", "25 NOV 22 (W.", "4000", "CALL", "1.50", "1.82%", "19.57%", "2.136") +
  leg(true, "", "-4", "23 NOV 22 (W.", "4000", "CALL", "", "1.65%", "20.27%", "") +
  leg(false, "CALENDAR", "+2", "25 NOV 22 (W.", "3850", "PUT", "2.05", "1.82%", "21.36%", "-1.593") +
  leg(false, "", "-2", "23 NOV 22 (W.", "3850", "PUT", "", "1.65%", "22.13%", "") +
  `<tr class="total">${"<td></td>".repeat(16)}<td>($322,05...</td><td></td></tr></tbody>`;
```
